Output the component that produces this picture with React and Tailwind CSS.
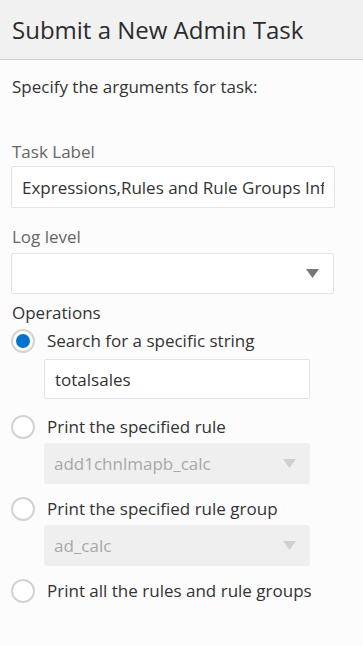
import React, { useState } from 'react'

function Caret({ disabled }) {
    return (
        <svg width="13" height="9" viewBox="0 0 13 9" className="shrink-0">
            <polygon points="0,0 13,0 6.5,9" fill={disabled ? '#cfcfcf' : '#777777'} />
        </svg>
    )
}

function Radio({ checked, label, onClick }) {
    return (
        <div className="flex items-center h-[30px] cursor-pointer" onClick={onClick}>
            <span className="w-[24px] h-[24px] ml-[11px] rounded-full border-2 border-[#d3d3d3] bg-white flex items-center justify-center">
                {checked && <span className="w-[14px] h-[14px] rounded-full bg-[#0572ce]" />}
            </span>
            <span className="ml-[12px] text-[17px] text-[#333333]">{label}</span>
        </div>
    )
}

function SubSelect({ value }) {
    return (
        <div className="ml-[44px] w-[266px] h-[41px] rounded-[3px] bg-[#efefef] flex items-center justify-between pl-[10px] pr-[14px]">
            <span className="text-[17px] text-[#a8a8a8]">{value}</span>
            <Caret disabled />
        </div>
    )
}

export default function App() {
    const [op, setOp] = useState(0)
    const [label, setLabel] = useState('Expressions,Rules and Rule Groups Information')
    const [search, setSearch] = useState('totalsales')

    return (
        <div className="w-[363px] h-[646px] bg-[#fcfcfc] font-['Open_Sans',sans-serif]">
            {/* Header */}
            <div className="h-[60px] bg-[#f1f1f1] border-b border-[#d0d0d0] flex items-center px-[12px]">
                <h1 className="text-[24px] text-[#2b2b2b] leading-none">Submit a New Admin Task</h1>
            </div>

            <div className="pt-[15px]">
                <p className="px-[12px] text-[17px] text-[#333333] leading-[24px]">Specify the arguments for task:</p>

                <label className="block px-[12px] mt-[41px] text-[17px] text-[#666666] leading-[24px]">Task Label</label>
                <input
                    value={label}
                    onChange={(e) => setLabel(e.target.value)}
                    className="block ml-[11px] mt-[2px] w-[324px] h-[42px] border border-[#e3e3e3] rounded-[2px] bg-white px-[10px] text-[17px] text-[#333333] outline-none"
                />

                <label className="block px-[12px] mt-[17px] text-[17px] text-[#666666] leading-[24px]">Log level</label>
                <div className="ml-[11px] mt-[4px] w-[323px] h-[41px] border border-[#e3e3e3] rounded-[2px] bg-white flex items-center justify-end pr-[14px]">
                    <Caret />
                </div>

                <div className="px-[12px] mt-[7px] text-[17px] text-[#333333] leading-[24px]">Operations</div>

                <div className="mt-[1px]">
                    <Radio checked={op === 0} label="Search for a specific string" onClick={() => setOp(0)} />
                    <input
                        value={search}
                        onChange={(e) => setSearch(e.target.value)}
                        className="block ml-[44px] mt-[3px] w-[266px] h-[40px] border border-[#e3e3e3] rounded-[2px] bg-white px-[10px] text-[17px] text-[#333333] outline-none"
                    />

                    <div className="mt-[13px]">
                        <Radio checked={op === 1} label="Print the specified rule" onClick={() => setOp(1)} />
                    </div>
                    <div className="mt-[1px]">
                        <SubSelect value="add1chnlmapb_calc" />
                    </div>

                    <div className="mt-[10px]">
                        <Radio checked={op === 2} label="Print the specified rule group" onClick={() => setOp(2)} />
                    </div>
                    <div className="mt-[1px]">
                        <SubSelect value="ad_calc" />
                    </div>

                    <div className="mt-[10px]">
                        <Radio checked={op === 3} label="Print all the rules and rule groups" onClick={() => setOp(3)} />
                    </div>
                </div>
            </div>
        </div>
    )
}
